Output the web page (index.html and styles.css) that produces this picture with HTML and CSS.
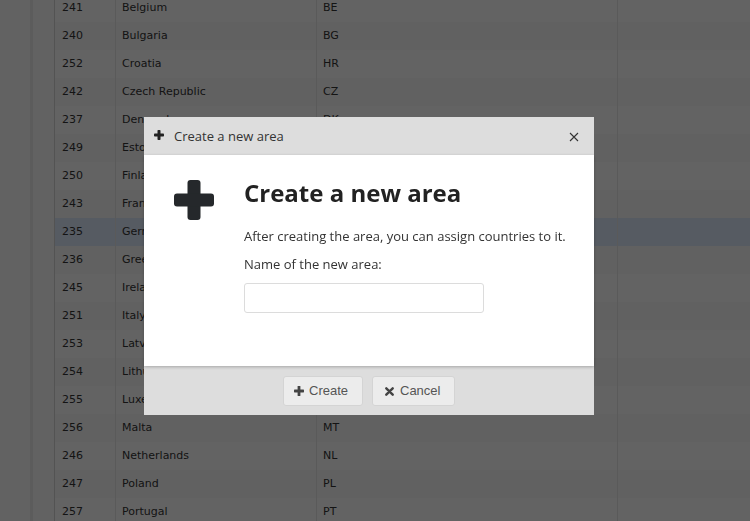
FILE: index.html
```html
<!DOCTYPE html>
<html>
<head>
<meta charset="utf-8">
<link rel="stylesheet" href="styles.css">
</head>
<body>
<div class="page">
  <div class="side"></div>
  <div class="side-gap"></div>
  <div class="gutter"></div>
  <div class="grid">
    <div class="row"><div class="c id">241</div><div class="c name">Belgium</div><div class="c code">BE</div><div class="c rest"></div></div>
    <div class="row"><div class="c id">240</div><div class="c name">Bulgaria</div><div class="c code">BG</div><div class="c rest"></div></div>
    <div class="row"><div class="c id">252</div><div class="c name">Croatia</div><div class="c code">HR</div><div class="c rest"></div></div>
    <div class="row"><div class="c id">242</div><div class="c name">Czech Republic</div><div class="c code">CZ</div><div class="c rest"></div></div>
    <div class="row"><div class="c id">237</div><div class="c name">Denmark</div><div class="c code">DK</div><div class="c rest"></div></div>
    <div class="row"><div class="c id">249</div><div class="c name">Estonia</div><div class="c code">EE</div><div class="c rest"></div></div>
    <div class="row"><div class="c id">250</div><div class="c name">Finland</div><div class="c code">FI</div><div class="c rest"></div></div>
    <div class="row"><div class="c id">243</div><div class="c name">France</div><div class="c code">FR</div><div class="c rest"></div></div>
    <div class="row sel"><div class="c id">235</div><div class="c name">Germany</div><div class="c code">DE</div><div class="c rest"></div></div>
    <div class="row"><div class="c id">236</div><div class="c name">Greece</div><div class="c code">GR</div><div class="c rest"></div></div>
    <div class="row"><div class="c id">245</div><div class="c name">Ireland</div><div class="c code">IE</div><div class="c rest"></div></div>
    <div class="row"><div class="c id">251</div><div class="c name">Italy</div><div class="c code">IT</div><div class="c rest"></div></div>
    <div class="row"><div class="c id">253</div><div class="c name">Latvia</div><div class="c code">LV</div><div class="c rest"></div></div>
    <div class="row"><div class="c id">254</div><div class="c name">Lithuania</div><div class="c code">LT</div><div class="c rest"></div></div>
    <div class="row"><div class="c id">255</div><div class="c name">Luxembourg</div><div class="c code">LU</div><div class="c rest"></div></div>
    <div class="row"><div class="c id">256</div><div class="c name">Malta</div><div class="c code">MT</div><div class="c rest"></div></div>
    <div class="row"><div class="c id">246</div><div class="c name">Netherlands</div><div class="c code">NL</div><div class="c rest"></div></div>
    <div class="row"><div class="c id">247</div><div class="c name">Poland</div><div class="c code">PL</div><div class="c rest"></div></div>
    <div class="row"><div class="c id">257</div><div class="c name">Portugal</div><div class="c code">PT</div><div class="c rest"></div></div>
  </div>
</div>
<div class="overlay"></div>
<div class="dialog">
  <div class="dlg-head">
    <svg class="head-plus" width="10" height="10" viewBox="0 0 10 10"><rect x="3.5" y="0" width="3" height="10" rx="0.8" fill="#222"/><rect x="0" y="3.5" width="10" height="3" rx="0.8" fill="#222"/></svg>
    <span class="head-title">Create a new area</span>
    <svg class="close" width="10" height="10" viewBox="0 0 10 10"><path d="M1 1L9 9M9 1L1 9" stroke="#333" stroke-width="1.1"/></svg>
  </div>
  <div class="dlg-body">
    <svg class="big-plus" width="40" height="40" viewBox="0 0 40 40"><rect x="13.5" y="0" width="13" height="40" rx="3" fill="#25282b"/><rect x="0" y="13.5" width="40" height="13" rx="3" fill="#25282b"/></svg>
    <div class="content">
      <h1 class="title">Create a new area</h1>
      <p class="desc">After creating the area, you can assign countries to it.</p>
      <label class="lbl">Name of the new area:</label>
      <input class="inp" type="text">
    </div>
  </div>
  <div class="dlg-foot">
    <button class="btn btn-create"><svg width="10" height="10" viewBox="0 0 10 10"><rect x="3.6" y="0" width="2.8" height="10" rx="0.6" fill="#444"/><rect x="0" y="3.6" width="10" height="2.8" rx="0.6" fill="#444"/></svg>Create</button>
    <button class="btn btn-cancel"><svg width="9" height="9" viewBox="0 0 9 9"><path d="M1.3 1.3L7.7 7.7M7.7 1.3L1.3 7.7" stroke="#444" stroke-width="2.4" stroke-linecap="round"/></svg>Cancel</button>
  </div>
</div>
</body>
</html>
```
FILE: styles.css
```css
html, body {
  margin: 0;
  padding: 0;
  height: 100%;
  overflow: hidden;
  background: #f6f6f6;
}
.page {
  display: flex;
  height: 521px;
  overflow: hidden;
}
.side {
  width: 30px;
  background: #f4f4f4;
}
.side-gap {
  width: 3px;
  background: #e6e6e6;
}
.gutter {
  width: 21px;
  background: #f4f4f4;
  border-right: 1px solid #d0d0d0;
}
.grid {
  flex: 1;
  margin-top: -6px;
  font-family: "DejaVu Sans", Verdana, sans-serif;
  font-size: 11px;
  color: #333;
}
.row {
  display: flex;
  height: 28px;
  background: #f8f8f8;
}
.row:nth-child(even) {
  background: #f2f2f2;
}
.row.sel {
  background: #d7e3f5;
}
.c {
  height: 28px;
  line-height: 28px;
  box-sizing: border-box;
  border-right: 1px solid #e0e0e0;
  padding-left: 6px;
  white-space: nowrap;
}
.id { width: 61px; padding-left: 7px; }
.name { width: 201px; }
.code { width: 301px; }
.rest { flex: 1; border-right: 0; }
.overlay {
  position: fixed;
  inset: 0;
  background: rgba(0, 0, 0, 0.6);
}
.dialog {
  position: fixed;
  left: 144px;
  top: 117px;
  width: 450px;
  height: 298px;
  display: flex;
  flex-direction: column;
  font-family: "Open Sans", sans-serif;
  color: #333;
}
.dlg-head {
  height: 38px;
  background: #dddddd;
  display: flex;
  align-items: center;
  padding: 0 10px;
  box-sizing: border-box;
}
.head-plus {
  margin-top: -2px;
}
.head-title {
  font-size: 13px;
  margin-left: 10px;
  flex: 1;
}
.close {
  margin-right: 5px;
  margin-top: 1px;
}
.dlg-body {
  flex: 1;
  background: #fff;
  display: flex;
  padding: 25px 0 0 30px;
  box-shadow: 0 1px 3px rgba(0,0,0,0.25);
  position: relative;
  z-index: 1;
}
.big-plus {
  flex: none;
}
.content {
  margin-left: 30px;
}
.title {
  margin: -1px 0 0 0;
  font-size: 24px;
  font-weight: 700;
  color: #222;
  line-height: 28px;
}
.desc {
  margin: 20px 0 0 0;
  font-size: 13px;
  line-height: 18px;
  white-space: nowrap;
}
.lbl {
  display: block;
  margin-top: 10px;
  font-size: 13px;
  line-height: 18px;
}
.inp {
  display: block;
  margin-top: 10px;
  width: 240px;
  height: 30px;
  box-sizing: border-box;
  border: 1px solid #dcdcdc;
  border-radius: 3px;
  background: #fff;
}
.dlg-foot {
  height: 49px;
  background: #dddddd;
  display: flex;
  justify-content: center;
  align-items: center;
  gap: 9px;
  box-sizing: border-box;
}
.btn {
  height: 30px;
  box-sizing: border-box;
  border: 1px solid #d4d4d4;
  border-radius: 3px;
  background: #ececec;
  font-family: "Liberation Sans", Arial, sans-serif;
  font-size: 13px;
  color: #555;
  display: flex;
  align-items: center;
  gap: 5px;
  padding: 0 0 0 10px;
  margin: 0;
}
.btn-create { width: 80px; }
.btn-cancel { width: 83px; gap: 6px; padding-left: 12px; }
.btn-cancel svg { margin-top: 2px; }
```
